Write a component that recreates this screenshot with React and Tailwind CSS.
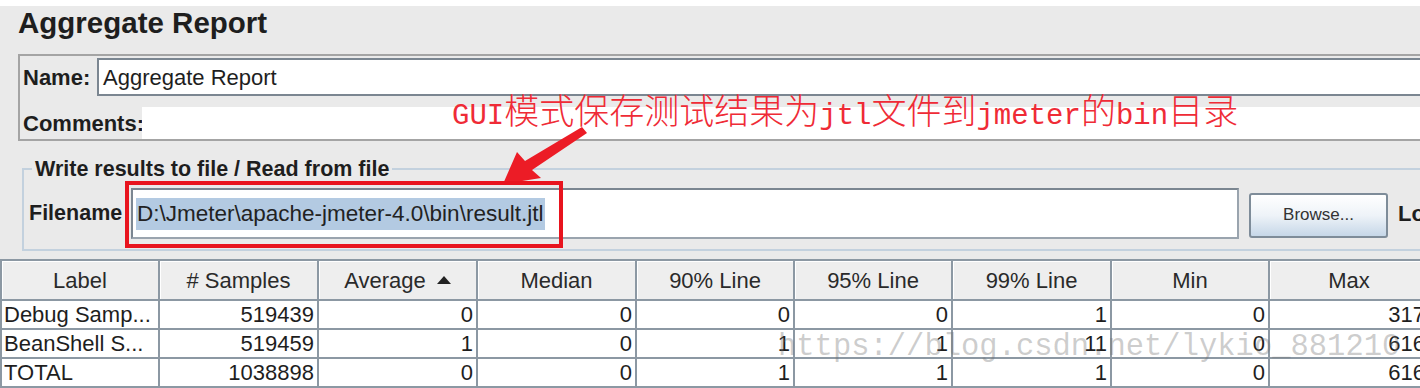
import React from "react";

const cols = ["Label", "# Samples", "Average", "Median", "90% Line", "95% Line", "99% Line", "Min", "Max"];
const rows = [
  ["Debug Samp...", "519439", "0", "0", "0", "0", "1", "0", "317"],
  ["BeanShell S...", "519459", "1", "0", "1", "1", "11", "0", "616"],
  ["TOTAL", "1038898", "0", "0", "1", "1", "1", "0", "616"],
];

function Latin({ children }) {
  return <span className="font-['Liberation_Mono',monospace] text-[29px]">{children}</span>;
}

export default function App() {
  return (
    <div className="relative w-[1420px] h-[388px] overflow-hidden bg-white font-['Liberation_Sans',Arial,sans-serif] text-[#1e1e1e]">
      <div className="mt-[6px] h-[382px] bg-[#eaeaea] flex flex-col">
        {/* Title */}
        <div className="h-[48px] pl-[18px] pt-[2px] text-[29.5px] leading-[30px] font-bold whitespace-nowrap">
          Aggregate Report
        </div>

        {/* Name / Comments panel */}
        <div className="ml-[18px] w-[1500px] h-[87px] shrink-0 border-2 border-[#a4a4a4] flex flex-col">
          <div className="flex items-start pt-[2px] h-[40px]">
            <span className="w-[77px] h-[38px] pl-[3px] flex items-center font-bold text-[22px]">Name:</span>
            <div className="flex-1 h-[38px] border-2 border-[#7b8691] border-r-0 bg-white flex items-center pl-[4px] text-[22px]">
              Aggregate Report
            </div>
          </div>
          <div className="flex items-end h-[43px]">
            <span className="w-[122px] h-[32px] pl-[3px] flex items-center font-bold text-[22px] whitespace-nowrap">Comments:</span>
            <div className="flex-1 h-[32px] bg-white" />
          </div>
        </div>

        {/* Write results fieldset */}
        <fieldset className="mt-[16px] ml-[22px] w-[1500px] shrink-0 border-2 border-[#c3d1de] border-r-0">
          <legend className="ml-[8px] px-[3px] font-bold text-[21.5px] leading-[24px] whitespace-nowrap">
            Write results to file / Read from file
          </legend>
          <div className="flex items-center pt-[7px] pb-[10px]">
            <span className="w-[107px] pl-[5px] font-bold text-[21.5px]">Filename</span>
            <div className="w-[1108px] h-[51px] border-2 border-[#7b8691] border-b-[#9aa4ae] border-r-[#9aa4ae] bg-white flex items-center pl-[3px]">
              <span className="bg-[#b3cae2] h-[32px] flex items-center pl-[1px] pr-[2px] text-[22.5px] text-[#222] whitespace-nowrap">
                D:\Jmeter\apache-jmeter-4.0\bin\result.jtl
              </span>
            </div>
            <button className="ml-[10px] mt-[3px] w-[139px] h-[45px] border-2 border-[#7e8c99] rounded-[3px] bg-gradient-to-b from-white via-[#eef3f8] to-[#c6d7e8] text-[17px] text-[#333]">
              Browse...
            </button>
            <span className="ml-[10px] font-bold text-[22px] whitespace-nowrap">Log/Display Only:</span>
          </div>
        </fieldset>

        {/* Table */}
        <div className="mt-[8px] grid grid-cols-[158px_159px_159px_159px_158px_158px_159px_158px_160px] border-t-2 border-l-2 border-[#8c98a3] w-[1430px] text-[22px]">
          {cols.map((c) => (
            <div
              key={c}
              className="h-[40px] bg-[#eeeeee] border-r-2 border-b-2 border-[#8c98a3] shadow-[inset_1px_1px_0_#ffffff] flex items-center justify-center whitespace-nowrap text-[#2a2a2a]"
            >
              {c}
              {c === "Average" && (
                <svg width="14" height="8" viewBox="0 0 14 8" className="ml-[11px]">
                  <polygon points="7,0 14,8 0,8" fill="#222" />
                </svg>
              )}
            </div>
          ))}
          {rows.map((r, ri) =>
            r.map((v, ci) => (
              <div
                key={ri + "-" + ci}
                className={
                  "h-[29px] bg-white border-r-2 border-b-2 border-[#8c98a3] flex items-center whitespace-nowrap overflow-hidden leading-none " +
                  (ci === 0 ? "justify-start pl-[2px]" : "justify-end pr-[3px]")
                }
              >
                {v}
              </div>
            ))
          )}
        </div>
      </div>

      {/* Annotation text */}
      <div className="absolute left-[452px] top-[91px] whitespace-nowrap text-[#ef2b36] font-['Noto_Sans_CJK_SC',sans-serif] text-[35px] leading-[36px] font-light">
        <Latin>GUI</Latin>模式保存测试结果为<Latin>jtl</Latin>文件到<Latin>jmeter</Latin>的<Latin>bin</Latin>目录
      </div>

      {/* Arrow */}
      <svg className="absolute left-0 top-0" width="1420" height="388" viewBox="0 0 1420 388">
        <polygon
          points="503,184 517,152 525,161 582,127 587,133 532,170 541,178"
          fill="#ec1c26"
        />
      </svg>

      {/* Red highlight rectangle */}
      <div className="absolute left-[125px] top-[181px] w-[438px] h-[67px] border-[4px] border-[#e8141e]" />

      {/* Watermark */}
      <div className="absolute left-[778px] top-[332px] font-['Liberation_Mono',monospace] text-[30.5px] leading-[30px] text-[rgba(110,110,110,0.35)] whitespace-nowrap">
        https://blog.csdn.net/lykio_881210
      </div>
    </div>
  );
}
